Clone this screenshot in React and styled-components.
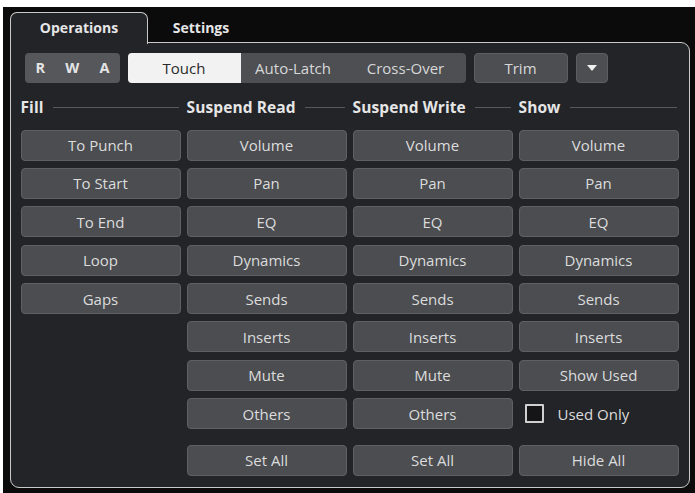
import styled, { createGlobalStyle } from "styled-components";

const Global = createGlobalStyle`
  body {
    margin: 0;
    background: #ffffff;
    font-family: "Open Sans", "Noto Sans", sans-serif;
  }
`;

const Screen = styled.div`
  margin: 7px 0 0 3px;
  width: 692px;
  height: 486px;
  background: #0b0b0c;
  padding: 5px 0 0 7px;
  box-sizing: border-box;
`;

const Tabs = styled.div`
  display: flex;
  align-items: flex-end;
  height: 30px;
  position: relative;
  z-index: 1;
`;

const Tab = styled.div`
  height: ${(p) => (p.active ? "32px" : "30px")};
  box-sizing: border-box;
  display: flex;
  align-items: center;
  justify-content: center;
  padding-bottom: ${(p) => (p.active ? "2px" : "0")};
  font-weight: 700;
  font-size: 14px;
  color: #e6e6e6;
  background: ${(p) => (p.active ? "#232428" : "transparent")};
  border: ${(p) => (p.active ? "1.5px solid #c9c9c9" : "none")};
  border-bottom: none;
  border-radius: 7px 7px 0 0;
  margin-bottom: ${(p) => (p.active ? "-2px" : "0")};
  width: ${(p) => (p.active ? "138px" : "106px")};
`;

const Panel = styled.div`
  width: 680px;
  height: 446px;
  box-sizing: border-box;
  background: #232428;
  border: 1.5px solid #c9c9c9;
  border-radius: 0 9px 9px 9px;
  padding: 9.5px 10px 0 9.5px;
`;

const Toolbar = styled.div`
  display: flex;
  align-items: center;
  height: 30px;
`;

const RwaGroup = styled.div`
  display: flex;
  align-items: center;
  justify-content: space-between;
  width: 95px;
  height: 30px;
  margin-left: 4px;
  padding: 0 10px 0 11px;
  box-sizing: border-box;
  background: #55575b;
  border-radius: 4px;
  font-weight: 700;
  font-size: 14.5px;
  color: #e4e4e4;
`;

const Segments = styled.div`
  display: flex;
  height: 30px;
  margin-left: 8px;
  background: #4d4f53;
  border-radius: 4px;
  overflow: hidden;
`;

const Segment = styled.div`
  width: ${(p) => p.w}px;
  display: flex;
  align-items: center;
  justify-content: center;
  font-size: 15px;
  color: ${(p) => (p.active ? "#2a2a2a" : "#d8d8d8")};
  background: ${(p) => (p.active ? "#f2f2f2" : "transparent")};
`;

const ToolButton = styled.div`
  width: ${(p) => p.w}px;
  height: 30px;
  box-sizing: border-box;
  margin-left: 8px;
  display: flex;
  align-items: center;
  justify-content: center;
  background: #4c4e52;
  border: 1px solid #5c5e62;
  border-radius: 4px;
  font-size: 15px;
  color: #d8d8d8;
`;

const Columns = styled.div`
  display: grid;
  grid-template-columns: repeat(4, 160px);
  column-gap: 6px;
  margin-top: 14px;
`;

const Column = styled.div`
  display: flex;
  flex-direction: column;
`;

const Header = styled.div`
  display: flex;
  align-items: center;
  height: 20px;
  margin-bottom: 13px;
  font-weight: 700;
  font-size: 15.5px;
  letter-spacing: 0.1px;
  color: #e6e6e6;
  &::after {
    content: "";
    flex: 1;
    height: 1px;
    background: #56585c;
    margin: 2px 2px 0 9px;
  }
`;

const Stack = styled.div`
  display: flex;
  flex-direction: column;
  gap: 7.4px;
`;

const Button = styled.div`
  height: 31px;
  box-sizing: border-box;
  display: flex;
  align-items: center;
  justify-content: center;
  background: #4b4d51;
  border: 1px solid #5e6064;
  border-radius: 4px;
  font-size: 15px;
  color: #dcdcdc;
  margin-top: ${(p) => (p.gapTop ? "8px" : "0")};
`;

const CheckRow = styled.label`
  height: 31px;
  display: flex;
  align-items: center;
  gap: 14px;
  padding-left: 6px;
  font-size: 15px;
  color: #dcdcdc;
`;

const Box = styled.span`
  width: 19px;
  height: 19px;
  box-sizing: border-box;
  border: 2px solid #d0d0d0;
  background: #151517;
  border-radius: 1px;
`;

const Arrow = () => (
  <svg width="10" height="6" viewBox="0 0 10 6">
    <path d="M0 0 H10 L5 6 Z" fill="#f0f0f0" />
  </svg>
);

const columns = [
  { title: "Fill", items: ["To Punch", "To Start", "To End", "Loop", "Gaps"] },
  {
    title: "Suspend Read",
    items: ["Volume", "Pan", "EQ", "Dynamics", "Sends", "Inserts", "Mute", "Others"],
    last: "Set All",
  },
  {
    title: "Suspend Write",
    items: ["Volume", "Pan", "EQ", "Dynamics", "Sends", "Inserts", "Mute", "Others"],
    last: "Set All",
  },
  {
    title: "Show",
    items: ["Volume", "Pan", "EQ", "Dynamics", "Sends", "Inserts", "Show Used"],
    check: "Used Only",
    last: "Hide All",
  },
];

export default function App() {
  return (
    <>
      <Global />
      <Screen>
        <Tabs>
          <Tab active>Operations</Tab>
          <Tab>Settings</Tab>
        </Tabs>
        <Panel>
          <Toolbar>
            <RwaGroup>
              <span>R</span>
              <span>W</span>
              <span>A</span>
            </RwaGroup>
            <Segments>
              <Segment w={113} active>
                Touch
              </Segment>
              <Segment w={105}>Auto-Latch</Segment>
              <Segment w={120}>Cross-Over</Segment>
            </Segments>
            <ToolButton w={94}>Trim</ToolButton>
            <ToolButton w={32}>
              <Arrow />
            </ToolButton>
          </Toolbar>
          <Columns>
            {columns.map((col) => (
              <Column key={col.title}>
                <Header>{col.title}</Header>
                <Stack>
                  {col.items.map((item) => (
                    <Button key={item}>{item}</Button>
                  ))}
                  {col.check && (
                    <CheckRow>
                      <Box />
                      {col.check}
                    </CheckRow>
                  )}
                  {col.last && <Button gapTop>{col.last}</Button>}
                </Stack>
              </Column>
            ))}
          </Columns>
        </Panel>
      </Screen>
    </>
  );
}
